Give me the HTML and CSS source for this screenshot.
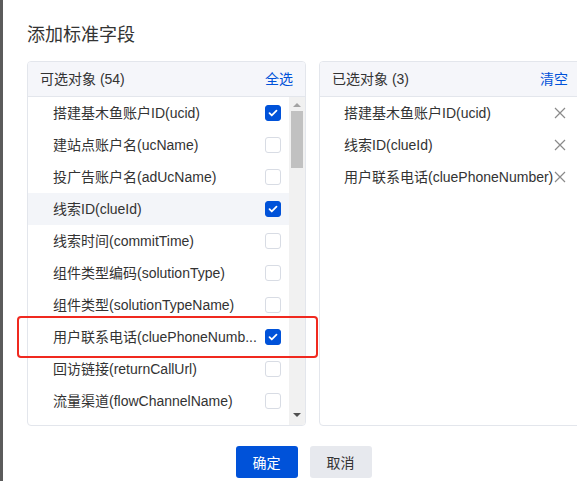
FILE: index.html
```html
<!DOCTYPE html>
<html>
<head>
<meta charset="utf-8"/>
<title>添加标准字段</title>
<link rel="stylesheet" href="styles.css">
</head>
<body>
<div class="dialog">
  <h1 class="dialog-title">添加标准字段</h1>

  <div class="transfer">
    <div class="panel panel-source">
      <div class="panel-head">
        <span>可选对象 (54)</span>
        <a class="link">全选</a>
      </div>
      <div class="panel-body">
        <ul class="items">
          <li class="item"><span class="label">搭建基木鱼账户ID(ucid)</span><span class="check on"></span></li>
          <li class="item"><span class="label">建站点账户名(ucName)</span><span class="check"></span></li>
          <li class="item"><span class="label">投广告账户名(adUcName)</span><span class="check"></span></li>
          <li class="item hover"><span class="label">线索ID(clueId)</span><span class="check on"></span></li>
          <li class="item"><span class="label">线索时间(commitTime)</span><span class="check"></span></li>
          <li class="item"><span class="label">组件类型编码(solutionType)</span><span class="check"></span></li>
          <li class="item"><span class="label">组件类型(solutionTypeName)</span><span class="check"></span></li>
          <li class="item"><span class="label">用户联系电话(cluePhoneNumb...</span><span class="check on"></span></li>
          <li class="item"><span class="label">回访链接(returnCallUrl)</span><span class="check"></span></li>
          <li class="item"><span class="label">流量渠道(flowChannelName)</span><span class="check"></span></li>
        </ul>
        <div class="scrollbar">
          <span class="arrow up"></span>
          <span class="thumb"></span>
          <span class="arrow down"></span>
        </div>
      </div>
    </div>

    <div class="panel panel-target">
      <div class="panel-head">
        <span>已选对象 (3)</span>
        <a class="link">清空</a>
      </div>
      <ul class="items chosen">
        <li class="item"><span class="label">搭建基木鱼账户ID(ucid)</span><svg class="close" viewBox="0 0 12 12"><path d="M1 1L11 11M11 1L1 11"/></svg></li>
        <li class="item"><span class="label">线索ID(clueId)</span><svg class="close" viewBox="0 0 12 12"><path d="M1 1L11 11M11 1L1 11"/></svg></li>
        <li class="item"><span class="label">用户联系电话(cluePhoneNumber)</span><svg class="close" viewBox="0 0 12 12"><path d="M1 1L11 11M11 1L1 11"/></svg></li>
      </ul>
    </div>
  </div>

  <div class="footer">
    <button class="btn primary">确定</button>
    <button class="btn">取消</button>
  </div>

  <!-- annotation box drawn over the list -->
  <div class="mark"></div>
</div>
</body>
</html>
```

FILE: styles.css
```css
body {
  margin: 0;
  background-color: white;
  border-left: 3px solid #5b5b5b;
  height: 481px;
  overflow: hidden;
  font-family: "Liberation Sans", "Noto Sans CJK SC", sans-serif;
  font-size: 14px;
  color: #333333;
}

.dialog {
  position: relative;
  width: 600px;
  padding: 22px 0 0 24px;
}

.dialog-title {
  margin: 0 0 13px;
  font-size: 18px;
  font-weight: normal;
  line-height: 26px;
  color: #333333;
}

.transfer {
  display: flex;
  gap: 13px;
}

.panel {
  border: 1px solid #e3e6ec;
  border-radius: 4px;
  height: 363px;
  overflow: hidden;
}

.panel-source {
  width: 277px;
}

.panel-target {
  width: 260px;
}

.panel-head {
  display: flex;
  justify-content: space-between;
  align-items: center;
  height: 34px;
  padding: 0 12px 0 12px;
  background-color: #f5f6fa;
  border-bottom: 1px solid #e3e6ec;
  line-height: 20px;
}

.link {
  color: #0052d9;
  cursor: pointer;
}

.panel-body {
  display: flex;
  height: 328px;
}

.items {
  list-style: none;
  margin: 0;
  padding: 0;
  flex: 1;
  overflow: hidden;
}

.item {
  display: flex;
  align-items: center;
  height: 32px;
  padding: 0 8px 0 25px;
  line-height: 20px;
}

.item.hover {
  background-color: #f3f5f9;
}

.label {
  flex: 1;
  min-width: 0;
  white-space: nowrap;
  overflow: hidden;
  padding-right: 10px;
}

.check {
  flex: none;
  width: 14px;
  height: 14px;
  border: 1px solid #d8dce4;
  border-radius: 3px;
  background-color: white;
}

.check.on {
  border-color: #0052d9;
  background: #0052d9 url("data:image/svg+xml;utf8,<svg xmlns='http://www.w3.org/2000/svg' viewBox='0 0 16 16'><path d='M4 8.2l2.6 2.6L12 5.4' fill='none' stroke='white' stroke-width='2' stroke-linecap='round' stroke-linejoin='round'/></svg>") center/14px no-repeat;
}

.scrollbar {
  flex: none;
  width: 16px;
  background-color: #f1f1f1;
  display: flex;
  flex-direction: column;
  align-items: center;
}

.thumb {
  margin-top: 4px;
  width: 12px;
  height: 57px;
  background-color: #c1c1c1;
}

.arrow {
  width: 0;
  height: 0;
  border-left: 4px solid transparent;
  border-right: 4px solid transparent;
}

.arrow.up {
  margin-top: 6px;
  border-bottom: 4px solid #a3a3a3;
}

.arrow.down {
  margin-top: auto;
  margin-bottom: 8px;
  border-top: 4px solid #505050;
}

.chosen .item {
  padding: 0 14px 0 24px;
}

.chosen .label {
  overflow: visible;
  padding-right: 0;
}

.close {
  flex: none;
  width: 12px;
  height: 12px;
  stroke: #8a8a8a;
  stroke-width: 1.2;
  fill: none;
}

.footer {
  display: flex;
  justify-content: center;
  gap: 12px;
  width: 553px;
  margin-top: 20px;
}

.btn {
  width: 62px;
  height: 32px;
  border: none;
  border-radius: 3px;
  background-color: #e7e9ee;
  color: #333333;
  font-family: "Noto Sans CJK SC", sans-serif;
  font-size: 14px;
  padding: 0;
}

.btn.primary {
  background-color: #0052d9;
  color: white;
}

.mark {
  position: absolute;
  left: 14px;
  top: 316px;
  width: 297px;
  height: 38px;
  border: 2px solid #f0291f;
  border-radius: 4px;
}
```
